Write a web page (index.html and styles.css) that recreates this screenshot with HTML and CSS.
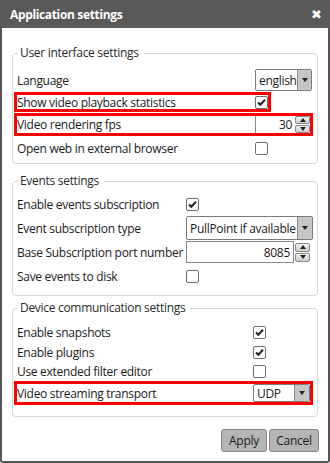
FILE: index.html
```html
<!DOCTYPE html>
<html>
<head>
<meta charset="utf-8">
<link rel="stylesheet" href="styles.css">
</head>
<body>
<div class="dialog">
  <div class="titlebar">
    <span class="title">Application settings</span>
    <span class="close">&#x2716;</span>
  </div>
  <div class="content">
    <fieldset class="group g1">
      <legend>User interface settings</legend>
      <div class="row h22 first"><span class="label">Language</span>
        <div class="select s-english"><span class="val">english</span><span class="arrow"><i class="tri-down"></i></span></div>
      </div>
      <div class="row hl h20 m1"><span class="label">Show video playback statistics</span><span class="cb checked"><svg viewBox="0 0 13 13" width="13" height="13"><path d="M3 6.5 L5.3 8.8 L10 3.8" fill="none" stroke="#222" stroke-width="2"/></svg></span></div>
      <div class="row hl h23 m1"><span class="label">Video rendering fps</span>
        <div class="spin s-fps"><span class="num">30</span><span class="btns"><span class="sb"><i class="tri-up"></i></span><span class="sb"><i class="tri-down"></i></span></span></div>
      </div>
      <div class="row h20 m2"><span class="label">Open web in external browser</span><span class="cb"></span></div>
    </fieldset>

    <fieldset class="group g2">
      <legend>Events settings</legend>
      <div class="row h22 first"><span class="label">Enable events subscription</span><span class="cb checked"><svg viewBox="0 0 13 13" width="13" height="13"><path d="M3 6.5 L5.3 8.8 L10 3.8" fill="none" stroke="#222" stroke-width="2"/></svg></span></div>
      <div class="row h24 m1"><span class="label">Event subscription type</span>
        <div class="select s-type"><span class="val">PullPoint if available</span><span class="arrow"><i class="tri-down"></i></span></div>
      </div>
      <div class="row h22 m1"><span class="label">Base Subscription port number</span>
        <div class="spin s-port"><span class="num">8085</span><span class="btns"><span class="sb"><i class="tri-up"></i></span><span class="sb"><i class="tri-down"></i></span></span></div>
      </div>
      <div class="row h22 m2"><span class="label">Save events to disk</span><span class="cb"></span></div>
    </fieldset>

    <fieldset class="group g3">
      <legend>Device communication settings</legend>
      <div class="row h20 first"><span class="label">Enable snapshots</span><span class="cb checked"><svg viewBox="0 0 13 13" width="13" height="13"><path d="M3 6.5 L5.3 8.8 L10 3.8" fill="none" stroke="#222" stroke-width="2"/></svg></span></div>
      <div class="row h20"><span class="label">Enable plugins</span><span class="cb checked"><svg viewBox="0 0 13 13" width="13" height="13"><path d="M3 6.5 L5.3 8.8 L10 3.8" fill="none" stroke="#222" stroke-width="2"/></svg></span></div>
      <div class="row h19"><span class="label">Use extended filter editor</span><span class="cb"></span></div>
      <div class="row hl h24"><span class="label">Video streaming transport</span>
        <div class="select s-udp"><span class="val">UDP</span><span class="arrow"><i class="tri-down"></i></span></div>
      </div>
    </fieldset>
  </div>
  <div class="buttons">
    <button class="btn b-apply">Apply</button>
    <button class="btn b-cancel">Cancel</button>
  </div>
</div>
</body>
</html>
```

FILE: styles.css
```css
* { box-sizing: border-box; }
html, body { margin: 0; padding: 0; }
body {
  width: 330px;
  height: 463px;
  overflow: hidden;
  background: #fff;
  font-family: "Open Sans", "Noto Sans", sans-serif;
  font-size: 12px;
  letter-spacing: -0.3px;
  color: #1a1a1a;
}
.dialog {
  width: 330px;
  height: 463px;
  display: flex;
  flex-direction: column;
  border: 2px solid #555;
  border-top: 0;
  border-radius: 0 0 3px 3px;
  background: #fff;
}
.titlebar {
  flex: none;
  height: 28px;
  margin: 0 -2px;
  padding: 0 8px 0 10px;
  background: #595959;
  color: #fff;
  display: flex;
  align-items: center;
  justify-content: space-between;
}
.title { font-weight: bold; font-size: 12px; letter-spacing: -0.35px; }
.close { font-size: 13px; line-height: 1; }
.content { padding: 17px 10px 0 10px; }
.group {
  margin: 0;
  padding: 0;
  min-width: 0;
  border: 1px solid #d3dae1;
  border-radius: 4px;
}
.group legend {
  margin-left: 5px;
  padding: 0 5px 0 2px;
  line-height: 16px;
  color: #2a2a2a;
}
.g1 { padding-bottom: 5px; }
.g2 { margin-top: 9px; padding-bottom: 8px; }
.g3 { margin-top: 4px; padding-bottom: 11px; }
.g1 .first { margin-top: 8px; }
.g2 .first { margin-top: 4px; }
.g3 .first { margin-top: 6px; }

.row {
  display: flex;
  align-items: center;
  margin-left: 1px;
  padding-left: 3px;
}
.row.hl {
  width: max-content;
  padding-left: 0;
  border: 3px solid #f00;
}
.h19 { height: 19px; }
.h20 { height: 20px; }
.h22 { height: 22px; }
.h23 { height: 23px; }
.h24 { height: 24px; }
.m1 { margin-top: 1px; }
.m2 { margin-top: 2px; }

.label { flex: none; white-space: nowrap; }
.g1 .label { width: 238px; }
.g2 .label { width: 169px; }
.g3 .label { width: 236px; }

.cb {
  flex: none;
  width: 13px;
  height: 13px;
  border: 1px solid #6e6e6e;
  border-radius: 2px;
  background: #fff;
  position: relative;
  overflow: hidden;
}
.cb svg { display: block; margin: -1px 0 0 -1px; }

.select {
  flex: none;
  display: flex;
  border: 1px solid #7a7a7a;
  border-radius: 2px;
  background: #fff;
  overflow: hidden;
}
.select .val { flex: 1; padding-left: 3px; white-space: nowrap; display: flex; align-items: center; }
.select .arrow {
  flex: none;
  width: 15px;
  background: #c6c6c6;
  border-left: 1px solid #8a8a8a;
  display: flex;
  align-items: center;
  justify-content: center;
}
.s-english { width: 57px; height: 22px; }
.s-type { width: 127px; height: 24px; }
.s-udp { width: 57px; height: 18px; }

.tri-down, .tri-up {
  display: block;
  width: 0;
  height: 0;
  border-left: 3.5px solid transparent;
  border-right: 3.5px solid transparent;
}
.tri-down { border-top: 4px solid #222; }
.tri-up { border-bottom: 4px solid #222; }

.spin { flex: none; display: flex; align-items: center; gap: 1px; }
.spin .num {
  display: flex;
  align-items: center;
  justify-content: flex-end;
  padding-right: 3px;
  border: 1px solid #8a8a8a;
  background: #fff;
}
.s-fps .num { width: 39px; height: 17px; border-top: 0; border-bottom: 0; border-right: 0; padding-right: 2px; }
.s-port .num { width: 108px; height: 22px; }
.spin .btns { display: flex; flex-direction: column; gap: 1px; }
.spin .sb {
  width: 15px;
  height: 8px;
  border: 1px solid #8a8a8a;
  border-radius: 2px;
  background: linear-gradient(#f2f2f2, #cdcdcd);
  display: flex;
  align-items: center;
  justify-content: center;
}
.s-port .sb { height: 9px; }

.buttons {
  margin-top: 12px;
  padding-right: 9px;
  display: flex;
  justify-content: flex-end;
  gap: 2px;
}
.btn {
  height: 23px;
  padding: 0;
  font-family: inherit;
  font-size: 12px;
  letter-spacing: -0.3px;
  color: #1a1a1a;
  background: #b5b5b5;
  border: 1px solid #858585;
  border-radius: 3px;
}
.b-apply { width: 46px; }
.b-cancel { width: 50px; }
```
